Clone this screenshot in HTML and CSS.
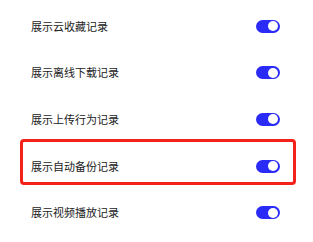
FILE: index.html
```html
<!DOCTYPE html>
<html lang="zh-CN">
    <head>
        <meta charset="utf-8">
        <title>记录设置</title>
        <link rel="stylesheet" href="styles.css">
    </head>
    <body>
    <div class="list">
        <div class="row">
            <span class="label">展示云收藏记录</span>
            <span class="switch on"><i class="knob"></i></span>
        </div>
        <div class="row">
            <span class="label">展示离线下载记录</span>
            <span class="switch on"><i class="knob"></i></span>
        </div>
        <div class="row">
            <span class="label">展示上传行为记录</span>
            <span class="switch on"><i class="knob"></i></span>
        </div>
        <div class="row marked">
            <span class="label">展示自动备份记录</span>
            <span class="switch on"><i class="knob"></i></span>
            <div class="highlight"></div>
        </div>
        <div class="row">
            <span class="label">展示视频播放记录</span>
            <span class="switch on"><i class="knob"></i></span>
        </div>
    </div>
    </body>
</html>
```

FILE: styles.css
```css
html,body{margin:0;padding:0;background:#fff;}
body{
    width:313px;
    height:242px;
    overflow:hidden;
    font-family:"Noto Sans CJK SC","Noto Sans",sans-serif;
}
.list{padding-top:3px;}
.row{
    position:relative;
    height:46.6px;
    display:flex;
    align-items:center;
    justify-content:space-between;
    padding:0 33px 0 31px;
}
.label{
    font-size:11px;
    color:#222;
    line-height:1;
}
.switch{
    width:24px;
    height:13px;
    border-radius:7px;
    background:#2b2bf8;
    display:flex;
    align-items:center;
    justify-content:flex-end;
    padding-right:2px;
    box-sizing:border-box;
}
.knob{
    display:block;
    width:10px;
    height:10px;
    border-radius:50%;
    background:#fff;
}
.highlight{
    position:absolute;
    left:20px;
    right:17px;
    top:-4px;
    bottom:4px;
    border:3px solid #f5221b;
    border-radius:4px;
}
```
